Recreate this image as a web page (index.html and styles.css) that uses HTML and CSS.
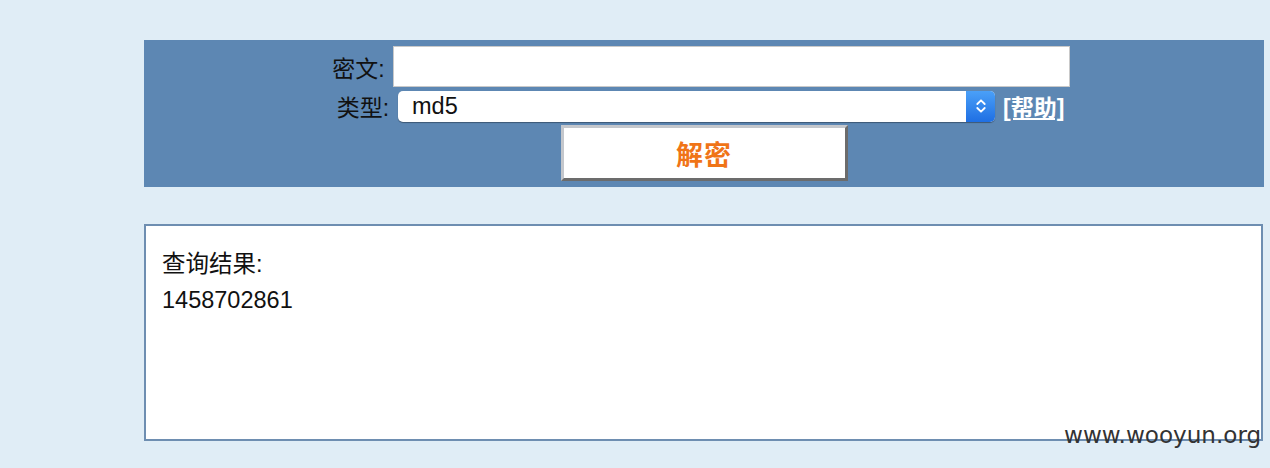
FILE: index.html
```html
<!DOCTYPE html>
<html>
<head>
<meta charset="utf-8">
<link rel="stylesheet" href="styles.css">
</head>
<body>
<div class="page">
  <form class="panel">
    <div class="row row-text">
      <span class="label">密文:</span>
      <div class="text-input"></div>
    </div>
    <div class="row row-select">
      <span class="label">类型:</span>
      <div class="select">
        <span class="select-value">md5</span>
        <span class="select-arrow">
          <svg width="12" height="20" viewBox="0 0 12 20"><path d="M2.3 8 L6 4.3 L9.7 8 M2.3 12 L6 15.7 L9.7 12" fill="none" stroke="#fff" stroke-width="1.8" stroke-linecap="round" stroke-linejoin="round"/></svg>
        </span>
      </div>
      <a class="help" href="#">[帮助]</a>
    </div>
    <div class="row row-btn">
      <div class="btn">解密</div>
    </div>
  </form>
  <div class="result">
    <div class="result-title">查询结果:</div>
    <div class="result-value">1458702861</div>
  </div>
  <div class="watermark">www.wooyun.org</div>
</div>
</body>
</html>
```
FILE: styles.css
```css
html, body {
  margin: 0;
  padding: 0;
  background: #e0edf6;
  font-family: "Liberation Sans", "Noto Sans CJK SC", sans-serif;
}
.page {
  position: relative;
  width: 1270px;
  height: 468px;
  padding: 40px 0 0 144px;
  box-sizing: border-box;
}
.panel {
  width: 1120px;
  height: 147px;
  background: #5d87b3;
  box-sizing: border-box;
  padding-top: 6px;
  display: flex;
  flex-direction: column;
  align-items: center;
  margin: 0;
}
.row {
  display: flex;
  align-items: center;
}
.label {
  font-size: 23px;
  color: #111;
  margin-right: 8px;
  white-space: nowrap;
}
.row-text {
  margin-left: -6px;
  height: 41px;
}
.text-input {
  width: 677px;
  height: 41px;
  box-sizing: border-box;
  background: #fff;
  border: 1px solid #c9c9c9;
}
.row-select {
  margin-top: 3px;
  margin-left: -7px;
  height: 32px;
}
.row-select .label {
  margin-right: 9px;
}
.select {
  width: 597px;
  height: 31px;
  background: #fff;
  border-radius: 5px;
  display: flex;
  align-items: center;
  overflow: hidden;
  box-shadow: 0 1px 1px rgba(0,0,0,0.35);
}
.select-value {
  flex: 1;
  padding-left: 14px;
  font-size: 23.5px;
  color: #111;
}
.select-arrow {
  width: 29px;
  height: 31px;
  background: linear-gradient(#4aa0f8, #1f6fe3);
  display: flex;
  align-items: center;
  justify-content: center;
}
.help {
  margin-left: 8px;
  font-size: 23px;
  color: #fff;
  font-weight: bold;
  text-decoration: underline;
  white-space: nowrap;
}
.row-btn {
  margin-top: 3px;
}
.btn {
  width: 287px;
  height: 56px;
  box-sizing: border-box;
  background: #fff;
  border-style: solid;
  border-width: 3px;
  border-color: #c4c7cc #6c6c6c #6c6c6c #c4c7cc;
  display: flex;
  align-items: center;
  justify-content: center;
  font-size: 27px;
  font-weight: bold;
  color: #f07417;
  letter-spacing: 1px;
}
.result {
  margin-top: 37px;
  width: 1119px;
  height: 217px;
  box-sizing: border-box;
  background: #fff;
  border: 2px solid #6e8eb1;
  padding: 20px 0 0 16px;
  font-size: 23.5px;
  color: #111;
}
.result-title {
  line-height: 36px;
}
.result-value {
  line-height: 36px;
}
.watermark {
  position: absolute;
  left: 1064px;
  top: 422px;
  font-family: "DejaVu Sans", sans-serif;
  font-size: 23.1px;
  color: #333;
}
```
